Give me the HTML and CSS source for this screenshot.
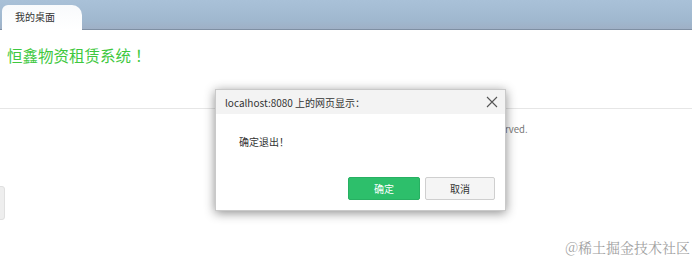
FILE: index.html
```html
<!DOCTYPE html>
<html lang="zh-CN">
<head>
    <meta charset="UTF-8">
    <title>我的桌面</title>
    <link rel="stylesheet" href="styles.css">
</head>
<body>
    <div class="tabbar">
        <div class="tab">我的桌面</div>
    </div>

    <div class="page">
        <h1 class="welcome">恒鑫物资租赁系统<span class="bang">！</span></h1>
        <div class="footer">
            <p>Copyright &copy; 2024 恒鑫物资租赁系统 All rights reserved.</p>
        </div>
    </div>

    <div class="side-handle"></div>

    <div class="dialog">
        <div class="dialog-head">
            <span>localhost:8080 上的网页显示：</span>
            <span class="close">
                <svg width="12" height="12" viewBox="0 0 12 12"><path d="M1 1L11 11M11 1L1 11" stroke="#555" stroke-width="1.1" fill="none"/></svg>
            </span>
        </div>
        <div class="dialog-body">确定退出！</div>
        <div class="dialog-foot">
            <button class="btn btn-ok">确定</button>
            <button class="btn btn-cancel">取消</button>
        </div>
    </div>

    <div class="watermark">@稀土掘金技术社区</div>
</body>
</html>
```

FILE: styles.css
```css
* {
    box-sizing: border-box;
}
body {
    margin: 0;
    font-family: "Noto Sans CJK SC", "Liberation Sans", sans-serif;
    background: #fff;
    color: #333;
    width: 692px;
    height: 266px;
    overflow: hidden;
    position: relative;
}

/* tab bar */
.tabbar {
    height: 30px;
    background: linear-gradient(#a9c1d8, #a0b8cf 70%, #9fb0c6);
    border-bottom: 1px solid #7f8fa3;
    padding: 5px 0 0 2px;
    display: flex;
    align-items: flex-end;
}
.tab {
    width: 80px;
    height: 25px;
    margin-bottom: -1px;
    background: linear-gradient(#f8fafc, #fff);
    border-radius: 6px 10px 0 0;
    font-size: 10px;
    line-height: 24px;
    padding-left: 13px;
    color: #333;
}

/* page */
.welcome {
    margin: 0;
    padding: 14px 0 0 7px;
    height: 78px;
    font-size: 15.5px;
    font-weight: normal;
    color: #3ec83e;
}
.bang {
    margin-left: 4px;
}
.footer {
    border-top: 1px solid #e6e6e6;
    text-align: center;
}
.footer p {
    margin: 13px 0 0;
    font-size: 9.5px;
    color: #777;
    padding-left: 124px;
}

.side-handle {
    position: absolute;
    left: -3px;
    top: 186px;
    width: 8px;
    height: 34px;
    background: #eee;
    border: 1px solid #e0e0e0;
    border-radius: 3px;
}

/* dialog */
.dialog {
    position: absolute;
    left: 215px;
    top: 89px;
    width: 291px;
    height: 122px;
    background: #fff;
    border: 1px solid #c9c9c9;
    box-shadow: 0 2px 10px rgba(0, 0, 0, 0.45);
    display: flex;
    flex-direction: column;
}
.dialog-head {
    height: 24px;
    background: #f3f3f3;
    display: flex;
    align-items: center;
    justify-content: space-between;
    padding: 0 7px 0 9px;
    font-size: 10px;
    color: #333;
}
.close {
    display: flex;
}
.dialog-body {
    padding: 20px 0 0 23px;
    font-size: 10px;
    color: #333;
    flex: 1;
}
.dialog-foot {
    display: flex;
    justify-content: flex-end;
    gap: 5px;
    padding: 0 10px 10px 0;
}
.btn {
    width: 72px;
    height: 23px;
    font-family: inherit;
    font-size: 10px;
    border-radius: 2px;
    padding: 0;
}
.btn-ok {
    background: #2dbf6b;
    border: 1px solid #27b062;
    color: #fff;
}
.btn-cancel {
    width: 70px;
    background: #f5f5f5;
    border: 1px solid #cfcfcf;
    color: #333;
}

.watermark {
    position: absolute;
    right: 2px;
    bottom: 9px;
    font-family: "Noto Serif CJK SC", "Noto Sans CJK SC", serif;
    font-size: 14px;
    color: #a0a0a0;
}
```
